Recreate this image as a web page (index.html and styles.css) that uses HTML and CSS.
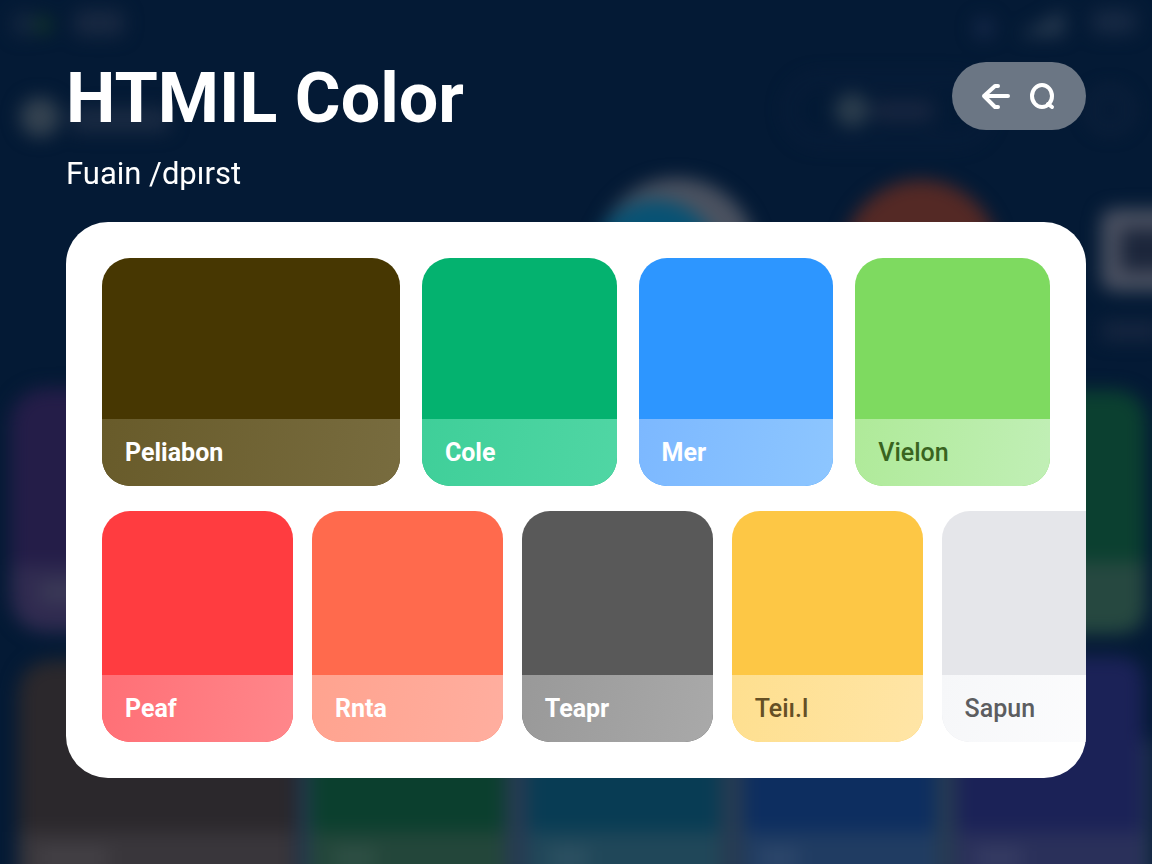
FILE: index.html
```html
<!DOCTYPE html>
<html lang="en">
<head>
  <meta charset="UTF-8">
  <meta name="viewport" content="width=device-width, initial-scale=1">
  <title>HTMIL Color</title>
  <link rel="stylesheet" href="styles.css">
</head>
<body>

<!-- blurred screen behind the panel -->
<svg class="backdrop" viewBox="0 0 1152 864" preserveAspectRatio="xMidYMid slice" aria-hidden="true">
  <g class="soft">
    <circle cx="24" cy="24" r="12" fill="#14263f"/>
    <circle cx="43" cy="25" r="9" fill="#123528"/>
    <rect x="74" y="10" width="50" height="26" rx="8" fill="#182841"/>
    <circle cx="40" cy="117" r="20" fill="#344250"/>
    <rect x="70" y="108" width="100" height="24" rx="8" fill="#1a2a42"/>
    <circle cx="984" cy="28" r="10" fill="#17294a"/>
    <path d="M1018 36l46-26v26z" fill="#26384e"/>
    <rect x="1092" y="10" width="44" height="24" rx="8" fill="#172943"/>
    <rect x="788" y="78" width="200" height="64" rx="32" fill="none" stroke="#0a1e3c" stroke-width="6"/>
    <circle cx="852" cy="110" r="17" fill="#2c3d4d"/>
    <rect x="872" y="100" width="62" height="22" rx="8" fill="#17253f"/>
    <circle cx="1110" cy="110" r="19" fill="none" stroke="#11233e" stroke-width="7"/>
    <circle cx="677" cy="258" r="80" fill="#4b5260"/>
    <circle cx="655" cy="264" r="64" fill="#075274"/>
    <circle cx="921" cy="258" r="78" fill="#542925"/>
    <rect x="1111" y="219" width="90" height="62" rx="3" fill="#1c263b" stroke="#4b5161" stroke-width="20"/>
    <rect x="1102" y="322" width="60" height="18" fill="#172640"/>
  </g>
  <g class="soft">
    <rect x="10" y="388" width="300" height="244" rx="36" fill="#241d48"/>
    <path d="M12 565h200v67H50q-38 0-38-38z" fill="#302b50"/>
    <rect x="40" y="582" width="60" height="20" fill="#3b3a57"/>
    <rect x="950" y="390" width="196" height="244" rx="30" fill="#0b4030"/>
    <path d="M950 562h196v42q0 30-30 30H950z" fill="#264840"/>
    <path d="M298 740h854v140H298z" fill="#273b52"/>
    <path d="M18 900V698q0-38 38-38h240v240z" fill="#2b282c"/>
    <path d="M310 680h195v210H310z" fill="#0b3f2e"/>
    <path d="M528 680h192v210H528z" fill="#083c54"/>
    <path d="M744 680h192v210H744z" fill="#0d2e60"/>
    <path d="M956 890V656h160q28 0 28 28v206z" fill="#1b2257"/>
    <path d="M18 832h278v60H18z" fill="#39363b"/>
    <path d="M310 832h195v60H310z" fill="#23463a"/>
    <path d="M528 832h192v60H528z" fill="#204759"/>
    <path d="M744 832h192v60H744z" fill="#203c62"/>
    <path d="M956 832h188v60H956z" fill="#2a305a"/>
    <path d="M38 848h70v20H38zM334 848h42v20h-42zM550 848h38v20h-38zM760 848h38v20h-38zM976 848h46v20h-46z" fill="#fff" fill-opacity=".06"/>
  </g>
</svg>

<main class="page">
  <header class="header">
    <div>
      <h1>HTMIL Color</h1>
      <p class="subtitle">Fuain /dpırst</p>
    </div>
    <div class="actions">
      <button type="button" aria-label="Back">
        <svg viewBox="0 0 30 30"><path d="M18 5h-3L4 15l11 11h3M4 15h24"/></svg>
      </button>
      <button type="button" aria-label="Search">
        <svg viewBox="0 0 30 30"><ellipse cx="14" cy="15" rx="10" ry="11"/><path d="M20 23l4 3"/></svg>
      </button>
    </div>
  </header>

  <section class="panel">
    <ul class="row row-top">
      <li class="tile olive"><span>Peliabon</span></li>
      <li class="tile green"><span>Cole</span></li>
      <li class="tile blue"><span>Mer</span></li>
      <li class="tile lime"><span>Vielon</span></li>
    </ul>
    <ul class="row row-scroll">
      <li class="tile red"><span>Peaf</span></li>
      <li class="tile coral"><span>Rnta</span></li>
      <li class="tile gray"><span>Teapr</span></li>
      <li class="tile yellow"><span>Teiı.l</span></li>
      <li class="tile silver"><span>Sapun</span></li>
    </ul>
  </section>
</main>

</body>
</html>
```
FILE: styles.css
```css
* {
  box-sizing: border-box;
}
body {
  margin: 0;
  background: #041a35;
  color: #fff;
  font-family: Roboto, "Liberation Sans", sans-serif;
}
.backdrop {
  position: fixed;
  inset: 0;
  width: 100%;
  height: 100%;
  z-index: -1;
}
.soft {
  filter: blur(9px);
}
.page {
  padding: 62px 66px 64px;
}
.header {
  display: flex;
  justify-content: space-between;
  align-items: flex-start;
  margin-bottom: 28px;
}
h1 {
  margin: 0;
  font-size: 70px;
  line-height: 72px;
  font-weight: 700;
}
.subtitle {
  margin: 20px 0 0;
  font-size: 31px;
  line-height: 40px;
}

/* back / search pill */
.actions {
  display: flex;
  align-items: center;
  gap: 18px;
  height: 68px;
  padding: 0 28px;
  border-radius: 34px;
  background: #6b7684;
}
.actions button {
  width: 30px;
  height: 30px;
  padding: 0;
  border: none;
  background: none;
  cursor: pointer;
}
.actions svg {
  display: block;
  fill: none;
  stroke: #fff;
  stroke-width: 4;
  stroke-linecap: round;
  stroke-linejoin: round;
}

/* color tiles */
.panel {
  padding: 36px;
  border-radius: 42px;
  background: #fff;
  overflow: hidden;
}
.row {
  display: grid;
  margin: 0;
  padding: 0;
  list-style: none;
}
.row-top {
  grid-template-columns: 1.53fr 1fr 1fr 1fr;
  grid-auto-rows: 228px;
  gap: 22px;
  margin-bottom: 25px;
}
.row-scroll {
  grid-auto-flow: column;
  grid-auto-columns: 19.4%;
  grid-template-rows: 231px;
  gap: 19px;
  margin-right: -36px;
}
.tile {
  display: flex;
  align-items: flex-end;
  border-radius: 28px;
  overflow: hidden;
}
.tile span {
  flex: 1;
  padding: 0 23px;
  font-size: 25px;
  line-height: 67px;
  font-weight: 700;
}
.olive { background: #473702; }
.olive span { background: linear-gradient(100deg, #685b2a, #786c3f); }
.green { background: #04b26f; }
.green span { background: linear-gradient(100deg, #3fcf99, #50d6a4); }
.blue { background: #2d96ff; }
.blue span { background: linear-gradient(100deg, #7cb8ff, #8dc6ff); }
.lime { background: #7eda60; }
.lime span { background: linear-gradient(100deg, #afea99, #c1efb6); }
.red { background: #ff3c40; }
.red span { background: linear-gradient(100deg, #ff6f76, #ff878b); }
.coral { background: #ff6a4d; }
.coral span { background: linear-gradient(100deg, #ffa38f, #ffae9f); }
.gray { background: #595959; }
.gray span { background: linear-gradient(100deg, #999, #a9a9a9); }
.yellow { background: #fdc745; }
.yellow span { background: linear-gradient(100deg, #fedf8f, #ffe5a6); }
.silver { background: #e5e6ea; }
.silver span { background: linear-gradient(100deg, #f6f7f9, #fdfdfe); }
.lime span,
.yellow span,
.silver span {
  font-weight: 500;
}
.lime span { color: #39641f; }
.yellow span { color: #655025; }
.silver span { color: #5c5d60; }
```
